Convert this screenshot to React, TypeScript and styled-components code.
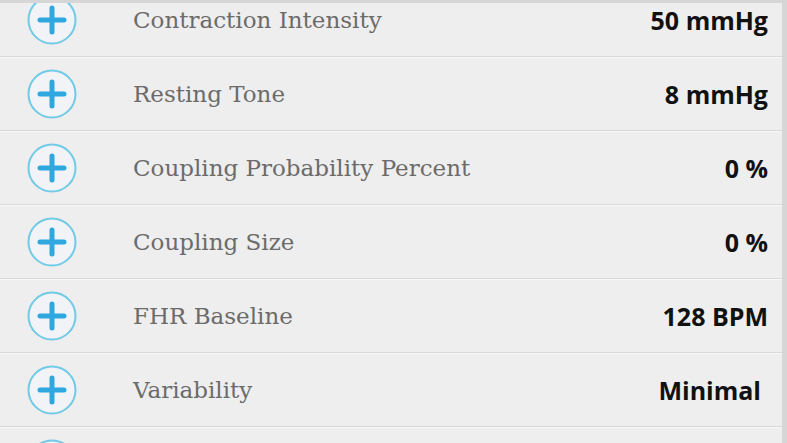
import styled, { createGlobalStyle } from 'styled-components'

const GlobalStyle = createGlobalStyle`
  html, body {
    margin: 0;
    padding: 0;
    background: #eeeeee;
  }
`

const Screen = styled.div`
  width: 787px;
  height: 443px;
  overflow: hidden;
  display: flex;
  flex-direction: column;
  background: #d6d6d6;
  box-sizing: border-box;
  padding: 3px 5px 0 0;
`

const ListViewport = styled.div`
  flex: 1;
  overflow: hidden;
  background: #eeeeee;
`

const ParamList = styled.ul`
  list-style: none;
  margin: -20px 0 0 0;
  padding: 0;
`

const Row = styled.li`
  display: flex;
  align-items: center;
  height: 74px;
  box-sizing: border-box;
  padding: 0 14px 0 27px;
  border-bottom: 1px solid #d8d8d8;
  border-top: 1px solid #f9f9f9;
`

const AddButton = styled.span`
  flex: none;
  width: 50px;
  height: 50px;
  display: flex;
  align-items: center;
  justify-content: center;
`

const Label = styled.span`
  flex: 1;
  margin-left: 56px;
  font-family: 'DejaVu Serif', 'Liberation Serif', serif;
  font-size: 23px;
  color: #6b6b6b;
  white-space: nowrap;
`

const Value = styled.span<{ $inset?: number }>`
  font-family: 'Open Sans', 'Liberation Sans', sans-serif;
  font-weight: 700;
  font-size: 25px;
  color: #111111;
  margin-right: ${(p) => p.$inset ?? 0}px;
  white-space: nowrap;
`

function PlusIcon() {
  return (
    <svg width="50" height="50" viewBox="0 0 50 50">
      <circle cx="25" cy="25" r="23.5" fill="#f1f3f6" stroke="#72cbe6" strokeWidth="2" />
      <path d="M25 13v24M13 25h24" stroke="#2ea8de" strokeWidth="5" strokeLinecap="round" />
    </svg>
  )
}

const params = [
  { label: 'Contraction Intensity', value: '50 mmHg' },
  { label: 'Resting Tone', value: '8 mmHg' },
  { label: 'Coupling Probability Percent', value: '0 %' },
  { label: 'Coupling Size', value: '0 %' },
  { label: 'FHR Baseline', value: '128 BPM' },
  { label: 'Variability', value: 'Minimal', inset: 7 },
  // next row is scrolled below the fold, only its button shows
  { label: '', value: '' },
]

export default function App() {
  return (
    <>
      <GlobalStyle />
      <Screen>
        <ListViewport>
          <ParamList>
            {params.map((p, i) => (
              <Row key={i}>
                <AddButton>
                  <PlusIcon />
                </AddButton>
                <Label>{p.label}</Label>
                <Value $inset={p.inset}>{p.value}</Value>
              </Row>
            ))}
          </ParamList>
        </ListViewport>
      </Screen>
    </>
  )
}
